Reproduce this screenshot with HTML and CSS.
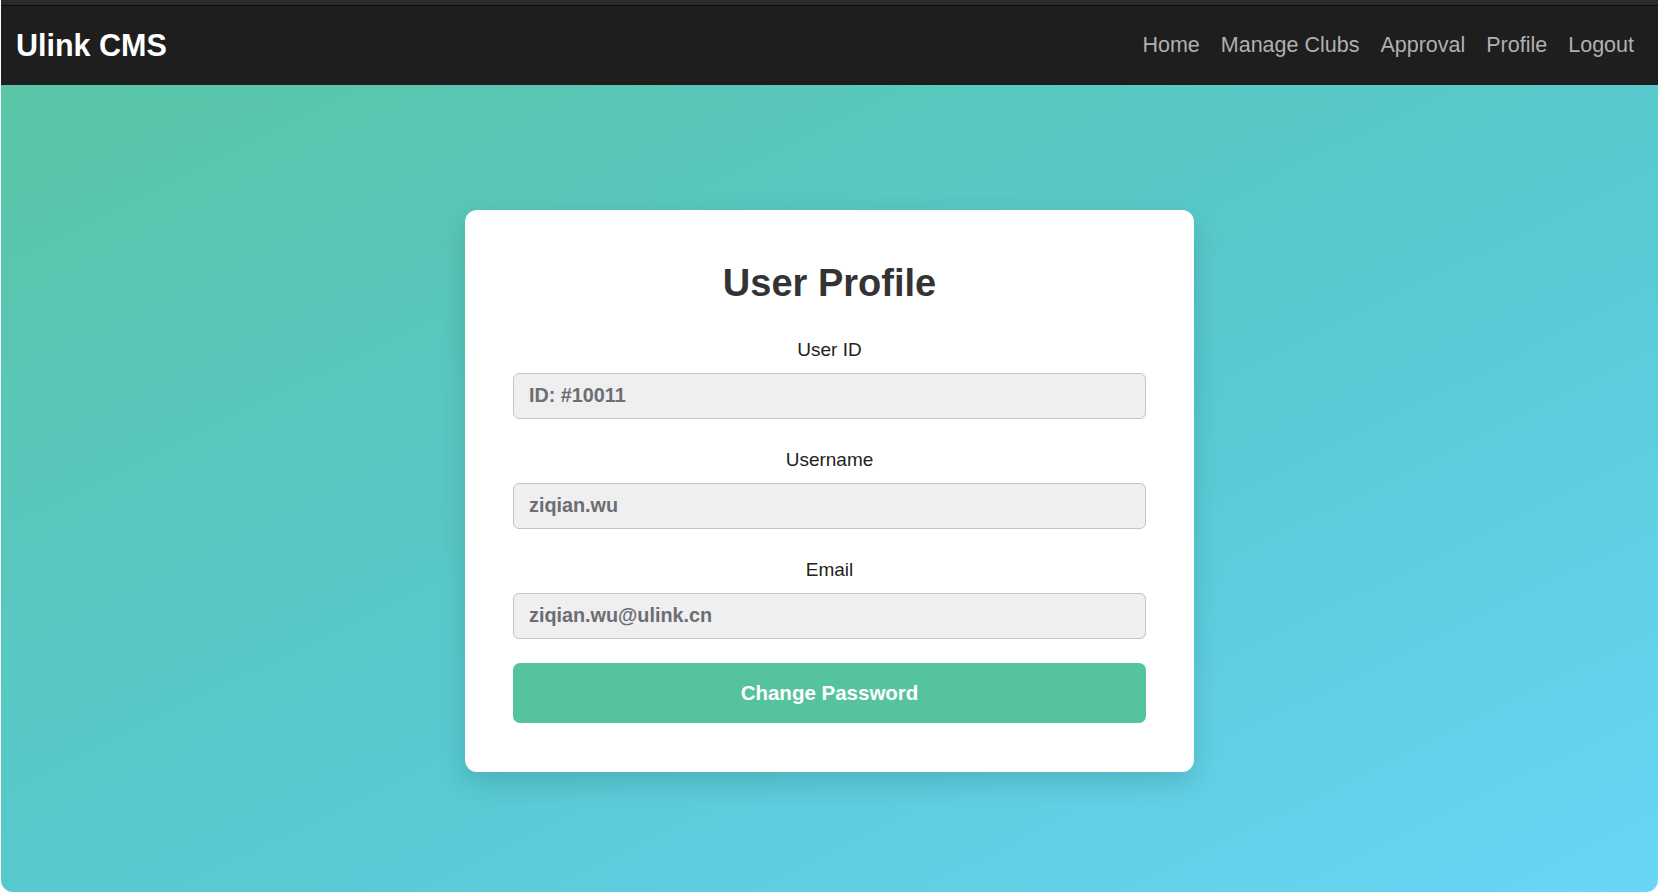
FILE: index.html
```html
<!DOCTYPE html>
<html lang="en">
<head>
  <meta charset="UTF-8">
  <meta name="viewport" content="width=device-width, initial-scale=1.0">
  <title>Ulink CMS - Profile</title>
  <link rel="stylesheet" href="styles.css">
</head>
<body>

  <div class="app">
    <div class="top-strip"></div>
    <nav class="navbar">
      <a href="#" class="brand">Ulink CMS</a>
      <div class="nav-links">
        <a href="#">Home</a>
        <a href="#">Manage Clubs</a>
        <a href="#">Approval</a>
        <a href="#">Profile</a>
        <a href="#">Logout</a>
      </div>
    </nav>

    <main class="main">
      <div class="card">
        <h1>User Profile</h1>
        <form class="profile-form">
          <div class="field">
            <label for="userId">User ID</label>
            <input type="text" id="userId" value="ID: #10011" readonly />
          </div>
          <div class="field">
            <label for="username">Username</label>
            <input type="text" id="username" value="ziqian.wu" readonly />
          </div>
          <div class="field">
            <label for="email">Email</label>
            <input type="text" id="email" value="ziqian.wu@ulink.cn" readonly />
          </div>
          <button type="button" class="btn-primary">Change Password</button>
        </form>
      </div>
    </main>
  </div>

</body>
</html>
```

FILE: styles.css
```css
body {
  font-family: 'Liberation Sans', Arial, sans-serif;
  background: #ffffff;
  margin: 0;
  overflow: hidden;
}

.app {
  margin: 0 2px 0 1px;
  height: 892px;
  display: flex;
  flex-direction: column;
  border-radius: 0 0 12px 12px;
  overflow: hidden;
}

.top-strip {
  height: 5px;
  background: #2a2a2a;
  border-bottom: 1px solid #0c0c0c;
}

/* Thanh điều hướng */
.navbar {
  height: 79px;
  background: #1e1e1e;
  display: flex;
  align-items: center;
  justify-content: space-between;
  padding: 0 24px 0 15px;
}

.brand {
  color: #ffffff;
  font-size: 30.5px;
  font-weight: bold;
  text-decoration: none;
}

.nav-links {
  display: flex;
  gap: 21px;
}

.nav-links a {
  color: #b0b0b0;
  font-size: 21.5px;
  text-decoration: none;
}

.main {
  flex: 1;
  background: linear-gradient(to bottom right, #5ac5a6 0%, #57cad2 55%, #69d6f6 100%);
  display: flex;
  justify-content: center;
  align-items: flex-start;
  padding-top: 125px;
}

.card {
  background: white;
  width: 729px;
  box-sizing: border-box;
  padding: 51px 48px 49px;
  border-radius: 12px;
  box-shadow: 0 10px 28px rgba(0, 0, 0, 0.14);
  text-align: center;
}

h1 {
  margin: 0 0 34px;
  font-size: 38px;
  line-height: 44px;
  color: #333333;
}

.profile-form {
  display: flex;
  flex-direction: column;
  gap: 30.5px;
}

.field {
  display: flex;
  flex-direction: column;
  gap: 12px;
}

label {
  font-size: 19px;
  line-height: 22px;
  color: #222222;
}

input {
  height: 45.5px;
  box-sizing: border-box;
  padding: 0 15px;
  border: 1px solid #c4c4c4;
  border-radius: 6px;
  background: #efefef;
  font-family: inherit;
  font-size: 19.8px;
  font-weight: bold;
  color: #6b6e74;
  outline: none;
}

.btn-primary {
  margin-top: -6px;
  height: 60px;
  border: none;
  border-radius: 7px;
  background: #56c39f;
  color: white;
  font-family: inherit;
  font-size: 20.5px;
  font-weight: bold;
  cursor: pointer;
}

.btn-primary:hover {
  background: #4db591;
}
```
